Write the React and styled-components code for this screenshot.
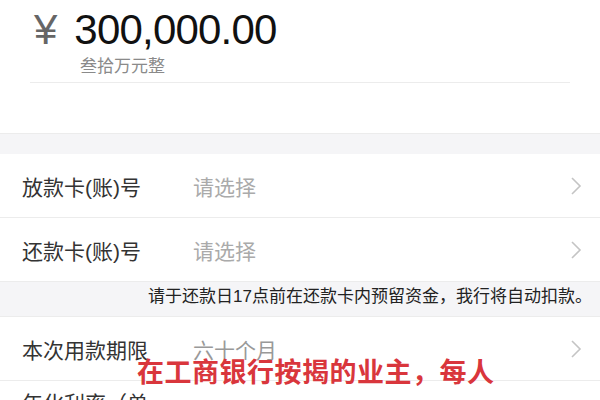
import styled, { createGlobalStyle } from "styled-components";

const GlobalStyle = createGlobalStyle`
  html, body {
    margin: 0;
    padding: 0;
    background: #ffffff;
  }
  body {
    font-family: "Liberation Sans", "Noto Sans CJK SC", sans-serif;
    width: 600px;
    height: 400px;
    overflow: hidden;
  }
`;

function Chevron() {
    return (
        <svg width="12" height="20" viewBox="0 0 12 20">
            <path d="M2 2 L10 10 L2 18" fill="none" stroke="#c4c4c4" strokeWidth="1.6" />
        </svg>
    );
}

function App() {
    return (
        <>
            <GlobalStyle />
            <Page>
                <AmountBox>
                    <AmountLine>
                        <Yen>¥</Yen>
                        <Amount>300,000.00</Amount>
                    </AmountLine>
                    <AmountWords>叁拾万元整</AmountWords>
                </AmountBox>
                <Gap />
                <Row>
                    <Label>放款卡(账)号</Label>
                    <Value>请选择</Value>
                    <Chevron />
                </Row>
                <Row>
                    <Label>还款卡(账)号</Label>
                    <Value>请选择</Value>
                    <Chevron />
                </Row>
                <Note>请于还款日17点前在还款卡内预留资金，我行将自动扣款。</Note>
                <Row>
                    <Label>本次用款期限</Label>
                    <Value $dark>六十个月</Value>
                    <Chevron />
                </Row>
                <Row $last>
                    <Label>年化利率（单</Label>
                </Row>
                <Caption>在工商银行按揭的业主，每人</Caption>
            </Page>
        </>
    );
}

export default App;

const Page = styled.div`
position: relative;
width: 600px;
height: 400px;
overflow: hidden;
background: #ffffff;
`;

const AmountBox = styled.div`
height: 133px;
padding: 0 30px;
box-sizing: border-box;
`;

const AmountLine = styled.div`
display: flex;
align-items: baseline;
gap: 17px;
padding: 4px 0 0 4px;
height: 52px;
`;

const Yen = styled.span`
font-size: 42px;
color: #666666;
line-height: 52px;
`;

const Amount = styled.span`
font-size: 42px;
color: #111111;
line-height: 52px;
letter-spacing: -0.8px;
`;

const AmountWords = styled.div`
font-size: 17px;
color: #8a8a8a;
line-height: 22px;
padding: 0 0 4px 50px;
border-bottom: 1px solid #ececec;
`;

const Gap = styled.div`
height: 20px;
background: #f5f5f7;
border-top: 1px solid #ececec;
`;

const Row = styled.div`
display: flex;
align-items: ${p => (p.$last ? "flex-start" : "center")};
height: 64px;
box-sizing: border-box;
padding: ${p => (p.$last ? "6px 18px 0 22px" : "0 18px 0 22px")};
background: #ffffff;
border-bottom: ${p => (p.$last ? "none" : "1px solid #ececec")};
svg {
    margin-left: auto;
}
`;

const Label = styled.div`
width: 171px;
font-size: 21px;
color: #333333;
`;

const Value = styled.div`
font-size: 21px;
color: ${p => (p.$dark ? "#999999" : "#aaaaaa")};
`;

const Note = styled.div`
height: 34px;
line-height: 30px;
background: #f5f5f7;
text-align: right;
padding-right: 8px;
font-size: 17px;
color: #222222;
border-bottom: 1px solid #ececec;
`;

const Caption = styled.div`
position: absolute;
left: 137px;
top: 351px;
font-size: 27px;
font-weight: bold;
color: #d9363c;
letter-spacing: 0.5px;
`;
